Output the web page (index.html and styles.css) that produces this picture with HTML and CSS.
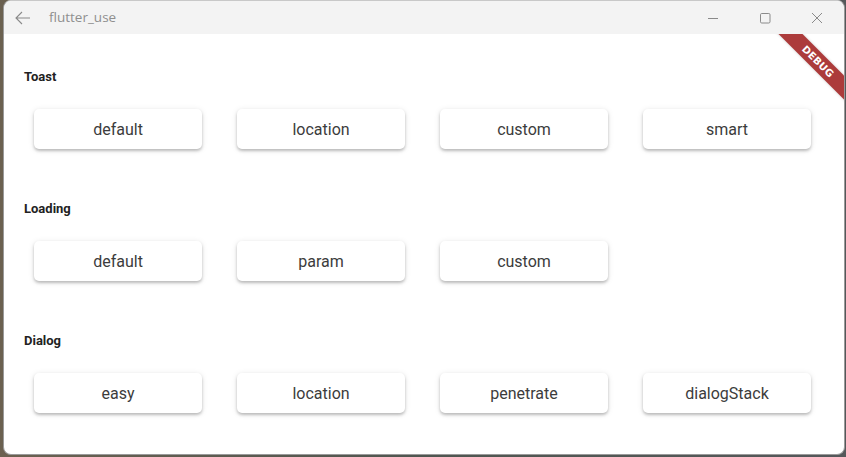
FILE: index.html
```html
<!DOCTYPE html>
<html>
<head>
<meta charset="utf-8">
<link rel="stylesheet" href="styles.css">
</head>
<body>
<div class="window">
  <div class="titlebar">
    <div class="title-left">
      <svg class="back" width="16" height="14" viewBox="0 0 16 14"><path d="M15 7H1.5M7 1L1 7l6 6" fill="none" stroke="#8a8a8a" stroke-width="1.1"/></svg>
      <span class="title">flutter_use</span>
    </div>
    <div class="controls">
      <div class="ctl"><svg width="12" height="12" viewBox="0 0 12 12"><path d="M1 6.5h10" stroke="#8a8a8a" stroke-width="1"/></svg></div>
      <div class="ctl"><svg width="12" height="12" viewBox="0 0 12 12"><rect x="1.5" y="1.5" width="9.5" height="9.5" rx="1.2" fill="none" stroke="#8a8a8a" stroke-width="1"/></svg></div>
      <div class="ctl"><svg width="12" height="12" viewBox="0 0 12 12"><path d="M1 1l10 10M11 1L1 11" stroke="#8a8a8a" stroke-width="1"/></svg></div>
    </div>
  </div>
  <div class="content">
    <div class="banner"><span>DEBUG</span></div>
    <section class="section">
      <h2 class="heading">Toast</h2>
      <div class="row">
        <button class="btn">default</button>
        <button class="btn">location</button>
        <button class="btn">custom</button>
        <button class="btn">smart</button>
      </div>
    </section>
    <section class="section">
      <h2 class="heading">Loading</h2>
      <div class="row">
        <button class="btn">default</button>
        <button class="btn">param</button>
        <button class="btn">custom</button>
      </div>
    </section>
    <section class="section">
      <h2 class="heading">Dialog</h2>
      <div class="row">
        <button class="btn">easy</button>
        <button class="btn">location</button>
        <button class="btn">penetrate</button>
        <button class="btn">dialogStack</button>
      </div>
    </section>
  </div>
</div>
</body>
</html>
```
FILE: styles.css
```css
* { box-sizing: border-box; }
html, body { margin: 0; padding: 0; }
body {
  width: 846px;
  height: 457px;
  overflow: hidden;
  background: linear-gradient(90deg, #6b6150 0%, #4f5650 50%, #55585a 100%);
  font-family: Roboto, "Noto Sans", sans-serif;
}
.window {
  margin-left: 3px;
  width: 842px;
  height: 455px;
  background: #ffffff;
  border-radius: 8px;
  overflow: hidden;
  display: flex;
  flex-direction: column;
  border: 1px solid #9a9a9a;
  border-top-color: #c8c8c8;
}
.titlebar {
  height: 33px;
  flex: none;
  background: #f3f3f3;
  display: flex;
  align-items: center;
  justify-content: space-between;
}
.title-left {
  display: flex;
  align-items: center;
  padding-left: 11px;
}
.back { display: block; }
.title {
  margin-left: 18px;
  font-family: "Open Sans", "Noto Sans", sans-serif;
  font-size: 13.5px;
  color: #8f8f8f;
  position: relative;
  top: -1px;
}
.controls {
  display: flex;
  align-items: center;
  margin-right: 1px;
}
.ctl {
  width: 52px;
  height: 33px;
  display: flex;
  align-items: center;
  justify-content: center;
}
.ctl svg { display: block; }
.content {
  position: relative;
  flex: 1;
  padding: 32px 0 0 20px;
  overflow: hidden;
}
.section {
  height: 132px;
}
.heading {
  margin: 0;
  height: 20px;
  padding-top: 1px;
  line-height: 20px;
  font-size: 13px;
  font-weight: 700;
  color: #222;
}
.row {
  display: flex;
  gap: 35px;
  margin-top: 23px;
  padding-left: 10px;
}
.btn {
  width: 168px;
  height: 40px;
  border: none;
  border-radius: 5px;
  background: #fff;
  font-family: Roboto, "Noto Sans", sans-serif;
  font-size: 16px;
  color: #3c3c3c;
  box-shadow: 0 2px 3px rgba(0,0,0,0.22), 0 1px 6px rgba(0,0,0,0.10);
  padding: 0;
}
.banner {
  position: absolute;
  top: 19px;
  right: -36px;
  width: 124px;
  height: 17px;
  background: #ac3b3b;
  transform: rotate(45deg);
  display: flex;
  align-items: center;
  justify-content: center;
  box-shadow: 0 0 3px rgba(0,0,0,0.2);
}
.banner span {
  color: #fff;
  font-family: "DejaVu Sans", sans-serif;
  font-weight: 700;
  font-size: 10px;
  letter-spacing: 0.2px;
}
```
